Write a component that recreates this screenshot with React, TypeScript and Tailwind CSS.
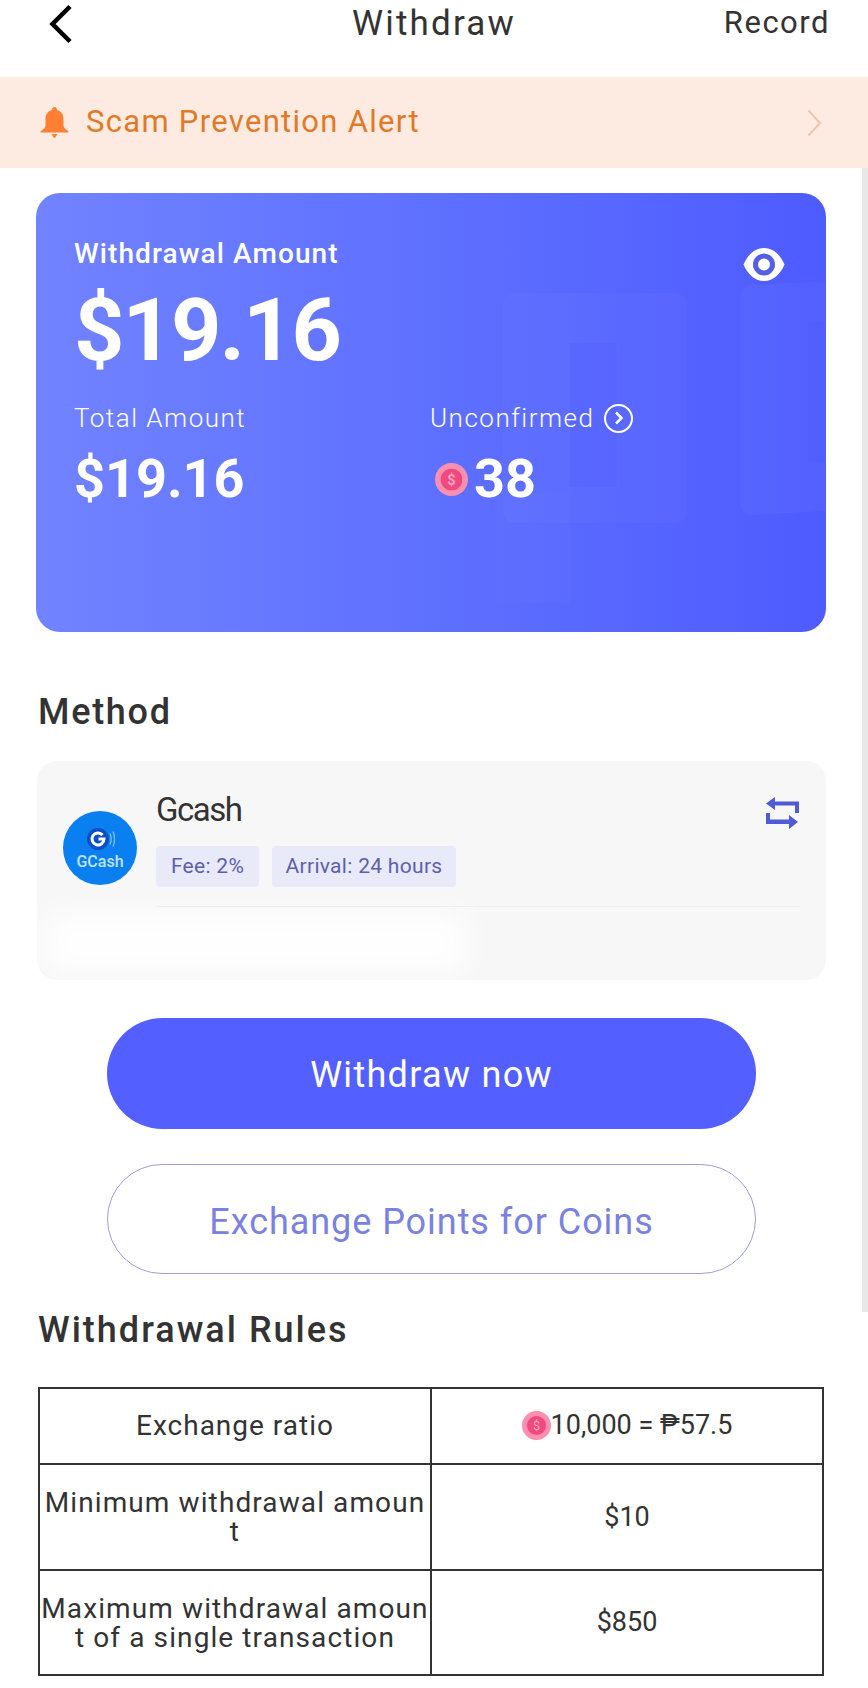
const sans = "font-['Roboto','Liberation_Sans',sans-serif]";

const Coin = ({ size, className }: { size: number; className?: string }) => (
  <svg width={size} height={size} viewBox="0 0 32 32" className={className}>
    <circle cx="16" cy="16" r="16" fill="#fb8fb0" />
    <circle cx="16" cy="16" r="10.5" fill="#ee4a7f" />
    <text x="16" y="21" textAnchor="middle" fontSize="14" fill="#ffa5c0" fontFamily="Roboto, sans-serif">
      $
    </text>
  </svg>
);

const Bell = () => (
  <svg width="29" height="31" viewBox="0 0 29 31" fill="#ff8033">
    <path d="M14.5 0c1.4 0 2.4 1 2.4 2.4v.7c4.200 1 6.600 4.400 6.600 8.900v6.400c0 1.800 2 4 4.600 5.600.8.5.5 1.500-.4 1.500H1.300c-.9 0-1.200-1-.4-1.500 2.600-1.600 4.600-3.800 4.600-5.600V12c0-4.500 2.400-7.900 6.600-8.900v-.7C12.100 1 13.100 0 14.500 0z" />
    <path d="M11.500 27h6l-2 3.200c-.5.800-1.500.8-2 0z" />
  </svg>
);

const Eye = () => (
  <svg width="42" height="33" viewBox="0 0 42 33" fill="none">
    <path d="M0.500 16.500C5 6 12.500 0 21 0s16 6 20.500 16.500C37 27 29.500 33 21 33S5 27 0.500 16.500z" fill="white" />
    <circle cx="21" cy="16.500" r="8.500" stroke="#545fe8" strokeWidth="5" />
  </svg>
);

const Swap = () => (
  <svg width="33" height="32" viewBox="0 0 33 32" fill="#4f5bd5">
    <path d="M9 0v4.500h24V16h-4V8.500H9V13L0 6.500z" />
    <path d="M23 32v-5H0V16h4v6.500h19V18l9 7z" />
  </svg>
);

const GcashLogo = () => (
  <div className="flex h-[74px] w-[74px] shrink-0 flex-col items-center justify-center rounded-full bg-[#0a7ff0]">
    <svg width="30" height="28" viewBox="0 0 30 28" fill="none">
      <circle cx="13" cy="14" r="11" fill="#0c4fc4" />
      <path d="M17.500 10a6 6 0 1 0 1.500 4h-5.500" stroke="white" strokeWidth="3" />
      <path d="M25 8.500c1.500 3.500 1.500 7.500 0 11M28 6.500c2 4.800 2 10.200 0 15" stroke="#7cc0ff" strokeWidth="1.300" />
    </svg>
    <span className="text-[16px] leading-[18px] font-medium text-[#bfe3ff]">GCash</span>
  </div>
);

export default function App() {
  return (
    <div className={`${sans} relative h-[1688px] w-[868px] overflow-hidden bg-white text-[#333]`}>
      {/* header */}
      <div className="flex h-[77px] items-start justify-between pt-1 pr-[38px] pl-[48px]">
        <svg width="26" height="40" viewBox="0 0 26 40" fill="none">
          <path d="M22 2.500 4.500 20 22 37.500" stroke="black" strokeWidth="4.500" />
        </svg>
        <span className="absolute left-0 w-full text-center text-[35px] leading-[40px] font-normal tracking-[2.2px]">
          Withdraw
        </span>
        <span className="text-[31px] leading-[38px] tracking-[1.5px]">Record</span>
      </div>

      {/* alert */}
      <div className="flex h-[91px] items-center bg-[#fdeae0] pr-[46px] pl-[40px]">
        <Bell />
        <span className="ml-[17px] flex-1 text-[31px] tracking-[1.3px] text-[#e07a28]">Scam Prevention Alert</span>
        <svg width="15" height="28" viewBox="0 0 15 28" fill="none">
          <path d="M1.500 1.500 13 14 1.500 26.500" stroke="#f3c4a8" strokeWidth="2" />
        </svg>
      </div>

      {/* balance card */}
      <div className="relative mt-[25px] mr-[42px] ml-[36px] h-[439px] overflow-hidden rounded-[24px] bg-gradient-to-r from-[#7183ff] to-[#4e5bff] pt-[45px] pl-[38px] text-white">
        <div className="absolute top-[100px] left-[467px] h-[230px] w-[184px] rounded-xl bg-white/[0.025]" />
        <div className="absolute top-[300px] left-[459px] h-[110px] w-[75px] bg-white/[0.015]" />
        <div className="absolute top-[150px] left-[534px] h-[144px] w-[47px] bg-[#4f5cff]/20" />
        <div className="absolute top-[90px] left-[704px] h-[230px] w-[100px] -skew-y-3 rounded-xl bg-white/[0.03]" />
        <div className="absolute top-[129px] left-[772px] h-[141px] w-[18px] bg-[#4f5cff]/40" />
        <div className="relative text-[28px] leading-[32px] font-medium tracking-[1.1px]">Withdrawal Amount</div>
        <div className="relative mt-[14px] text-[88px] leading-[92px] font-bold tracking-[-2px]">$19.16</div>
        <div className="relative mt-[26px] flex">
          <div className="w-[356px]">
            <div className="text-[26px] leading-[32px] font-light tracking-[1.5px]">Total Amount</div>
            <div className="mt-[15px] text-[54px] leading-[60px] font-bold">$19.16</div>
          </div>
          <div>
            <div className="flex items-center gap-[10px] text-[26px] leading-[32px] font-light tracking-[1.5px]">
              Unconfirmed
              <span className="flex h-[29px] w-[29px] items-center justify-center rounded-full border-[2.5px] border-white">
                <svg width="10" height="14" viewBox="0 0 10 14" fill="none">
                  <path d="M2 1.500 7.500 7 2 12.500" stroke="white" strokeWidth="2.500" />
                </svg>
              </span>
            </div>
            <div className="mt-[15px] flex items-center gap-[6px] pl-[5px] text-[54px] leading-[60px] font-bold">
              <Coin size={33} />
              38
            </div>
          </div>
        </div>
        <div className="absolute top-[55px] right-[41px]">
          <Eye />
        </div>
      </div>

      {/* method */}
      <div className="mt-[58px] ml-[38px] text-[36px] leading-[44px] font-medium tracking-[1.7px]">Method</div>
      <div className="relative mt-[27px] mr-[42px] ml-[37px] h-[219px] overflow-hidden rounded-[20px] bg-[#f7f7f7]">
        <div className="absolute top-[152px] left-[9px] h-[60px] w-[420px] bg-white/90 blur-lg" />
        <div className="relative flex pt-[27px] pr-[26px] pl-[26px]">
          <div className="pt-[23px]">
            <GcashLogo />
          </div>
          <div className="ml-[19px] flex-1">
            <div className="flex items-start justify-between">
              <span className="text-[33px] leading-[44px] tracking-[-1.5px] text-[#333]">Gcash</span>
              <div className="pt-[9px] pr-px">
                <Swap />
              </div>
            </div>
            <div className="mt-[14px] flex gap-[13px] text-center text-[21px] leading-[41px] tracking-[0.3px] text-[#5d5fa8]">
              <span className="w-[103px] rounded-[4px] bg-[#e8eaf9]">Fee: 2%</span>
              <span className="w-[184px] rounded-[4px] bg-[#e8eaf9]">Arrival: 24 hours</span>
            </div>
            <div className="mt-[19px] h-px bg-[#eeeeee]" />
          </div>
        </div>
      </div>

      {/* actions */}
      <div className="mt-[38px] mr-[112px] ml-[107px] flex h-[111px] items-center justify-center rounded-full bg-[#535fff] pt-[2px] text-[36px] tracking-[1.3px] text-white">
        Withdraw now
      </div>
      <div className="mt-[35px] mr-[112px] ml-[107px] flex h-[110px] items-center justify-center rounded-full border border-[#9a9ed8] pt-[6px] text-[36px] tracking-[0.95px] text-[#7a82e0]">
        Exchange Points for Coins
      </div>

      {/* rules */}
      <div className="mt-[34px] ml-[38px] text-[36px] leading-[44px] font-medium tracking-[2px]">Withdrawal Rules</div>
      <div className="mt-[35px] ml-[38px] grid h-[289px] w-[786px] grid-cols-[392px_390px] grid-rows-[76px_106px_103px] border-2 border-[#333] text-center text-[28px] leading-[29px] text-[#333]">
        <div className="flex items-center justify-center border-r-2 border-b-2 border-[#333] pb-[2px] tracking-[1px]">
          Exchange ratio
        </div>
        <div className="flex items-center justify-center border-b-2 border-[#333] pb-[2px] text-[27px]">
          <Coin size={29} />
          10,000 = ₱57.5
        </div>
        <div className="flex items-center justify-center border-r-2 border-b-2 border-[#333] tracking-[1.1px] whitespace-nowrap">
          <span>
            Minimum withdrawal amoun
            <br />t
          </span>
        </div>
        <div className="flex items-center justify-center border-b-2 border-[#333] text-[27px]">$10</div>
        <div className="flex items-center justify-center border-r-2 border-[#333] tracking-[1.1px] whitespace-nowrap">
          <span>
            Maximum withdrawal amoun
            <br />t of a single transaction
          </span>
        </div>
        <div className="flex items-center justify-center text-[27px]">$850</div>
      </div>

      {/* scrollbar */}
      <div className="absolute top-[168px] right-0 h-[1144px] w-[6px] bg-[#e8e8e8]" />
    </div>
  );
}
